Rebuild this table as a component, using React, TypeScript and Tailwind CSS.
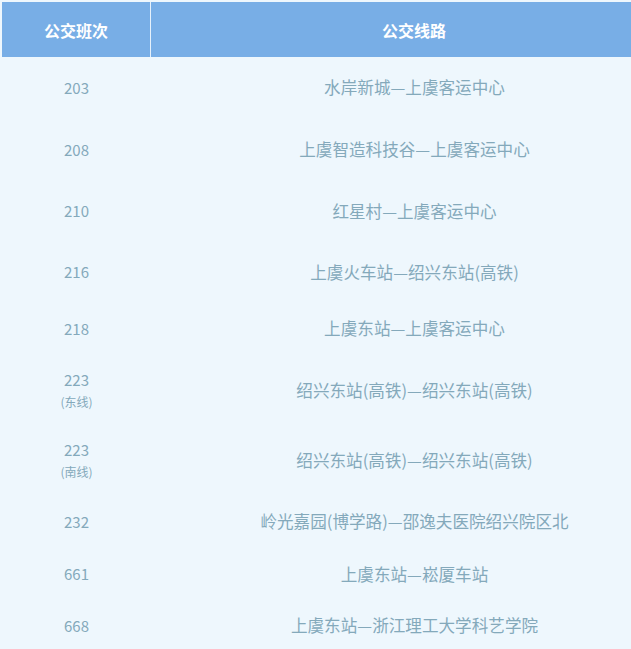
import React from "react";

const rows: { no: string; sub?: string; route: string; h: string }[] = [
  { no: "203", route: "水岸新城—上虞客运中心", h: "h-[62px]" },
  { no: "208", route: "上虞智造科技谷—上虞客运中心", h: "h-[62px]" },
  { no: "210", route: "红星村—上虞客运中心", h: "h-[61px]" },
  { no: "216", route: "上虞火车站—绍兴东站(高铁)", h: "h-[61px]" },
  { no: "218", route: "上虞东站—上虞客运中心", h: "h-[52px]" },
  { no: "223", sub: "(东线)", route: "绍兴东站(高铁)—绍兴东站(高铁)", h: "h-[72px]" },
  { no: "223", sub: "(南线)", route: "绍兴东站(高铁)—绍兴东站(高铁)", h: "h-[68px]" },
  { no: "232", route: "岭光嘉园(博学路)—邵逸夫医院绍兴院区北", h: "h-[54px]" },
  { no: "661", route: "上虞东站—崧厦车站", h: "h-[51px]" },
  { no: "668", route: "上虞东站—浙江理工大学科艺学院", h: "h-[52px]" },
];

export default function App() {
  return (
    <div
      className="w-[631px] h-[649px] overflow-hidden bg-white"
      style={{ fontFamily: '"Noto Sans CJK SC", "Noto Sans", sans-serif' }}
    >
      <div className="w-[680px] pl-[2px] pt-[2px] bg-[#eef7fd]">
        <div className="flex h-[55px] bg-[#78aee6] text-white font-bold text-[16px]">
          <div className="w-[149px] flex items-center justify-center border-r border-[#e6f1fb]">
            公交班次
          </div>
          <div className="w-[526px] flex items-center justify-center">公交线路</div>
        </div>
        {rows.map((r, i) => (
          <div key={i} className={`flex ${r.h} text-[#84a9bb]`}>
            <div className="w-[149px] flex flex-col items-center justify-center -mt-[1px]">
              <div className="text-[15px] leading-[20px]">{r.no}</div>
              {r.sub && <div className="text-[12px] leading-[20px] mt-[2px]">{r.sub}</div>}
            </div>
            <div className="w-[527px] flex items-center justify-center text-[16.6px] -mt-[1px]">
              {r.route}
            </div>
          </div>
        ))}
      </div>
    </div>
  );
}
